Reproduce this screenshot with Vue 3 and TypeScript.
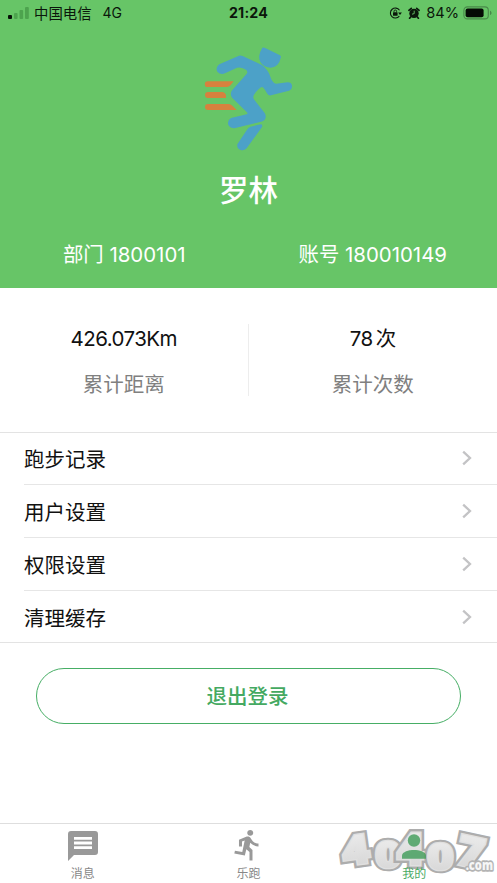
<script setup lang="ts">
interface Stat {
  value: string
  unit?: string
  label: string
}
interface Digit {
  char: string
  place: string
}

const stats: Stat[] = [
  { value: '426.073Km', label: '累计距离' },
  { value: '78', unit: '次', label: '累计次数' },
]
const menu: string[] = ['跑步记录', '用户设置', '权限设置', '清理缓存']
const digits: Digit[] = [
  { char: '4', place: 'translate(42 154) rotate(-8) scale(1.18 1.02)' },
  { char: '0', place: 'translate(134 160) scale(1.14 .92)' },
  { char: '4', place: 'translate(200 150) scale(1.18 1.12)' },
  { char: '0', place: 'translate(290 166) scale(1.16 .94)' },
  { char: '7', place: 'translate(373 146) rotate(12) scale(1.16 1.06)' },
]
</script>

<template>
  <main class="screen">
    <header class="profile">
      <div class="status">
        <div class="carrier">
          <svg class="signal" width="22" height="14" viewBox="0 0 22 14">
            <rect x="0" y="9" width="4" height="4" rx="1" fill="#071007" />
            <rect x="6" y="7" width="3.6" height="6" rx="1" />
            <rect x="11.5" y="4" width="3.6" height="9" rx="1" />
            <rect x="17" y="1" width="3.8" height="12" rx="1" />
          </svg>
          <span class="operator">中国电信</span>
          <span>4G</span>
        </div>
        <strong class="clock">21:24</strong>
        <div class="power">
          <svg width="13" height="12" viewBox="0 0 13 12">
            <path d="M10.5 3.2A5 5 0 1 0 10.3 9.2" fill="none" stroke="#0b170b" stroke-width="1.1" />
            <path d="M9.1 5.6h3.8L11 8z" fill="#0b170b" />
            <rect x="4" y="5.3" width="4.6" height="3.5" rx=".6" fill="#0b170b" />
            <path d="M5 5.4V4.3a1.3 1.3 0 0 1 2.6 0v1.1" fill="none" stroke="#0b170b" stroke-width=".9" />
          </svg>
          <svg class="alarm" width="12" height="12" viewBox="0 0 12 12">
            <circle cx="6" cy="6.4" r="4.7" fill="#0b170b" />
            <path d="M.9 3.3l2.4-2M11.1 3.3l-2.4-2M2.6 10l-1 1.3M9.4 10l1 1.3" stroke="#0b170b" stroke-width="1.7" stroke-linecap="round" />
            <path d="M6.2 3.7v2.9L4 7.2" fill="none" stroke="#68c567" stroke-width=".9" />
          </svg>
          <span class="percent">84%</span>
          <svg width="30" height="14" viewBox="0 0 30 14">
            <rect x=".9" y=".9" width="24.4" height="12" rx="3.5" fill="none" stroke="#49894a" stroke-width="1.1" />
            <rect x="2.6" y="2.6" width="18" height="8.6" rx="2" fill="#050b05" />
            <path d="M27 4.7c2 .7 2 3.7 0 4.4z" fill="#49894a" />
          </svg>
        </div>
      </div>
      <svg class="runner" width="120" height="120" viewBox="0 0 360 360">
        <g fill="#4ca1c8">
          <path d="M217 23Q222 22 227 25L270 46Q275 49 272 54Q267 80 243 83Q221 83 211 66Q202 48 217 23Z" />
          <path d="M88 73L147 47Q152 45 158 48L216 75Q233 88 240 107Q246 128 258 131L293 127Q304 127 306 137Q307 149 297 152L243 166Q235 168 230 158Q222 143 216 141Q206 144 192 164Q187 172 194 181L224 219Q231 231 223 241Q217 246 207 247L133 265Q121 265 115 255Q111 241 123 234L170 223Q175 221 170 216L127 174Q119 164 125 152L169 103Q175 97 169 90Q156 80 141 83L105 100Q91 105 82 95Q75 82 88 73Z" />
          <path d="M181 260L213 253Q219 254 216 261L170 325Q162 333 152 330Q140 326 142 313L171 269Q174 263 181 260Z" />
        </g>
        <g fill="#d7813e">
          <path d="M53 124H131L122 135Q117 141 110 141H53A8.5 8.5 0 0 1 53 124Z" />
          <path d="M54 156H98Q106 157 108 165V174H54A9 9 0 0 1 54 156Z" />
          <path d="M54 192H116Q122 192 127 197L140 210H54A9 9 0 0 1 54 192Z" />
        </g>
      </svg>
      <h1 class="name">罗林</h1>
      <div class="identity">
        <span>部门 1800101</span>
        <span>账号 180010149</span>
      </div>
    </header>

    <section class="stats">
      <div v-for="stat in stats" :key="stat.label" class="stat">
        <div class="value">{{ stat.value }}<span v-if="stat.unit" class="unit">{{ stat.unit }}</span></div>
        <div class="label">{{ stat.label }}</div>
      </div>
    </section>

    <nav class="menu">
      <a v-for="item in menu" :key="item" class="row">
        <span>{{ item }}</span>
        <svg width="10" height="16" viewBox="0 0 10 16">
          <path d="M1.2 1.6L8 8l-6.8 6.4" fill="none" stroke="#c3c3c5" stroke-width="2.3" />
        </svg>
      </a>
    </nav>

    <button class="logout">退出登录</button>

    <footer class="tabs">
      <svg class="mark" width="167" height="68" viewBox="0 0 501 204">
        <defs>
          <linearGradient id="silver" x1="0" y1="0" x2="0" y2="1">
            <stop offset="0" stop-color="#f1f1f1" />
            <stop offset="1" stop-color="#d2d2d2" />
          </linearGradient>
        </defs>
        <g v-for="(digit, index) in digits" :key="index" class="digit" :transform="digit.place">
          <text class="rim" aria-hidden="true">{{ digit.char }}</text>
          <text class="face">{{ digit.char }}</text>
        </g>
        <text class="domain" x="407" y="164" textLength="82" lengthAdjust="spacingAndGlyphs">.com</text>
      </svg>
      <div class="tab">
        <svg class="chat" width="32" height="32" viewBox="0 0 32 32">
          <path d="M4 1H28a3 3 0 0 1 3 3V22a3 3 0 0 1-3 3H7L1 31V4a3 3 0 0 1 3-3Z" fill="#999" />
          <path d="M7 8.4H25M7 13H25M7 17.6H25" stroke="#fff" stroke-width="2.8" />
        </svg>
        <span>消息</span>
      </div>
      <div class="tab">
        <svg width="36" height="34" viewBox="0 0 24 24" preserveAspectRatio="none">
          <path fill="#999" d="M13.49 5.48c1.1 0 2-.9 2-2s-.9-2-2-2-2 .9-2 2 .9 2 2 2zm-3.6 13.9l1-4.4 2.1 2v6h2v-7.5l-2.1-2 .6-3c1.3 1.5 3.3 2.5 5.5 2.5v-2c-1.9 0-3.5-1-4.3-2.4l-1-1.6c-.4-.6-1-1-1.7-1-.3 0-.5.1-.8.1l-5.2 2.2v4.7h2v-3.4l1.8-.7-1.6 8.1-4.9-1-.4 2 7 1.4z" />
        </svg>
        <span>乐跑</span>
      </div>
      <div class="tab active">
        <svg width="26" height="26" viewBox="0 0 26 26">
          <circle cx="13" cy="6.5" r="6.2" />
          <path d="M1 24.8V21.5C1 17.8 8 16 13 16s12 1.8 12 5.5v3.3Z" />
        </svg>
        <span>我的</span>
      </div>
    </footer>
  </main>
</template>

<style>
body {
  margin: 0;
  background: #fff;
}
</style>

<style scoped>
.screen {
  display: flex;
  flex-direction: column;
  width: 497px;
  height: 883px;
  overflow: hidden;
  background: #fff;
  color: #111;
  font-family: Inter, "Noto Sans CJK SC", sans-serif;
  font-size: 20.5px;
}
.screen, .screen * {
  box-sizing: border-box;
}
svg {
  display: block;
  flex: none;
}
.profile {
  flex: none;
  display: flex;
  flex-direction: column;
  align-items: center;
  height: 288px;
  background: #67c567;
  color: #fff;
}
.status {
  display: grid;
  grid-template-columns: 1fr auto 1fr;
  align-items: center;
  width: 100%;
  height: 26px;
  padding: 0 4px 1px 8px;
  color: #0b170b;
  font-size: 14px;
}
.carrier, .power {
  display: flex;
  align-items: center;
}
.signal {
  margin-right: 4px;
  fill: #4da34e;
}
.operator {
  margin-right: 11px;
  font-size: 14.4px;
}
.clock {
  margin-right: 4px;
  font-size: 14.2px;
  font-weight: 700;
  letter-spacing: 0.2px;
}
.power {
  justify-content: flex-end;
}
.alarm {
  margin: 0 6px;
}
.percent {
  margin-right: 4px;
  font-size: 14.6px;
}
.runner {
  margin: 14px 0 0 3px;
}
.name {
  margin: 8px 0 0;
  font-size: 29.5px;
  font-weight: 500;
  line-height: 44px;
}
.identity {
  display: grid;
  grid-template-columns: 1fr 1fr;
  width: 100%;
  margin-top: 28px;
  line-height: 30px;
  font-size: 20.4px;
  text-align: center;
}
.stats {
  flex: none;
  display: grid;
  grid-template-columns: 1fr 1fr;
  height: 144px;
  padding-top: 36px;
}
.stat {
  height: 72px;
  text-align: center;
}
.stat:first-child {
  border-right: 1px solid #ededed;
}
.value {
  line-height: 30px;
  letter-spacing: -0.55px;
}
.unit {
  margin-left: 3px;
}
.label {
  margin-top: 16px;
  line-height: 30px;
  color: #808080;
}
.menu {
  flex: none;
  display: grid;
  grid-template-rows: 51px 53px 53px 52px;
  padding-left: 24px;
  border-top: 1px solid #e3e3e3;
  border-bottom: 1px solid #e3e3e3;
}
.row {
  display: flex;
  align-items: center;
  justify-content: space-between;
  padding: 0 25px 1px 0;
}
.row + .row {
  border-top: 1px solid #e6e6e6;
}
.row:last-child {
  padding-bottom: 0;
}
.logout {
  flex: none;
  width: 425px;
  height: 56px;
  margin: 25px 36px 0;
  padding: 0 2px 2px 0;
  border: 1px solid #46ae65;
  border-radius: 28px;
  background: #fff;
  color: #44a961;
  font-family: inherit;
  font-size: 20.5px;
  font-weight: 500;
}
.tabs {
  position: relative;
  flex: none;
  display: grid;
  grid-template-columns: repeat(3, 1fr);
  height: 60px;
  margin-top: auto;
  border-top: 1px solid #dedede;
}
.tab {
  position: relative;
  display: flex;
  flex-direction: column;
  align-items: center;
  justify-content: space-between;
  padding-top: 4px;
  color: #888;
  font-size: 12px;
}
.tab span {
  line-height: 19px;
}
.chat {
  margin-top: 2px;
}
.active {
  padding-top: 10px;
  color: #48aa62;
}
.active svg {
  fill: #3f9d59;
  opacity: 0.8;
}
.mark {
  position: absolute;
  right: 0;
  bottom: 0;
}
.digit text, .domain {
  font-family: "Open Sans", Inter, sans-serif;
  font-weight: 800;
  paint-order: stroke;
}
.digit text {
  font-size: 120px;
  stroke-linejoin: miter;
  stroke-miterlimit: 3;
}
.rim {
  fill: #adadad;
  stroke: #adadad;
  stroke-width: 21px;
}
.face {
  fill: url(#silver);
  stroke: #e0e0e0;
  stroke-width: 8px;
}
.domain {
  font-size: 42px;
  fill: #f6f6f6;
  stroke: #b4b4b4;
  stroke-width: 10px;
  stroke-linejoin: round;
}
</style>
